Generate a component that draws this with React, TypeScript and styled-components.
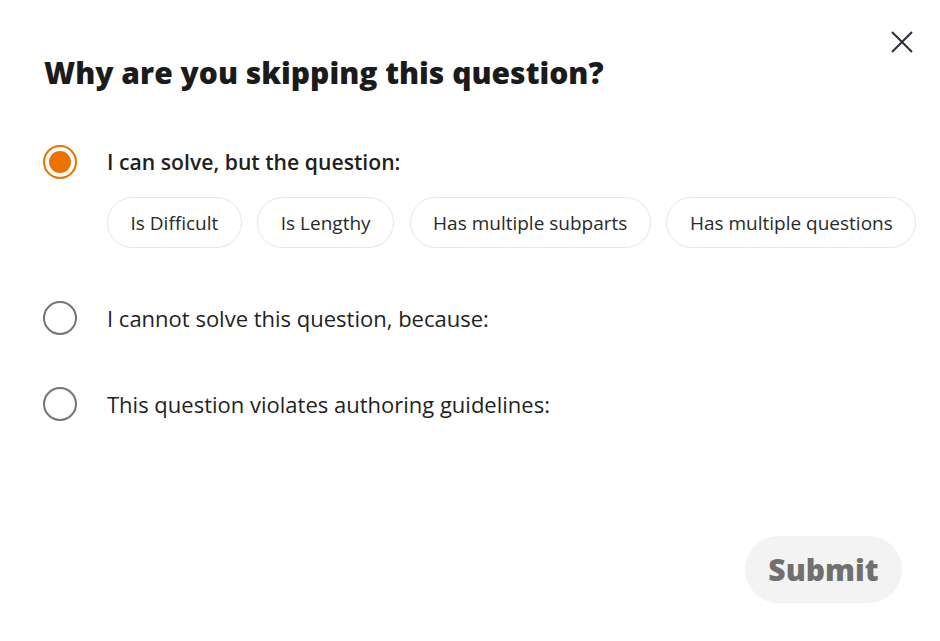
import React, { useState } from "react";
import styled, { createGlobalStyle } from "styled-components";

const GlobalStyle = createGlobalStyle`
  body {
    margin: 0;
    background: #ffffff;
    font-family: "Open Sans", "Lato", sans-serif;
    color: #1f1f1f;
  }
`;

const Dialog = styled.div`
  width: 940px;
  height: 641px;
  box-sizing: border-box;
  padding: 28px 24px 38px 43px;
  display: flex;
  flex-direction: column;
`;

const Header = styled.div`
  display: flex;
  justify-content: space-between;
  align-items: flex-start;
`;

const Title = styled.h1`
  margin: 24px 0 0 1px;
  font-size: 30px;
  line-height: 42px;
  font-weight: 800;
  color: #1b1b1b;
`;

const CloseButton = styled.button`
  width: 28px;
  height: 28px;
  padding: 0;
  border: none;
  background: none;
  cursor: pointer;
  display: flex;
  align-items: center;
  justify-content: center;
`;

const Options = styled.div`
  margin-top: 51px;
  display: flex;
  flex-direction: column;
`;

const Option = styled.div<{ $space: number }>`
  margin-bottom: ${(p) => p.$space}px;
`;

const OptionRow = styled.label`
  display: flex;
  align-items: center;
  gap: 30px;
  cursor: pointer;
`;

const Radio = styled.span<{ $checked: boolean }>`
  width: 34px;
  height: 34px;
  box-sizing: border-box;
  border-radius: 50%;
  border: 2.5px solid ${(p) => (p.$checked ? "#e87500" : "#747474")};
  display: flex;
  align-items: center;
  justify-content: center;
  flex-shrink: 0;

  &::after {
    content: "";
    width: 22px;
    height: 22px;
    border-radius: 50%;
    background: ${(p) => (p.$checked ? "#ec7200" : "transparent")};
  }
`;

const Label = styled.span<{ $bold: boolean }>`
  font-size: ${(p) => (p.$bold ? 21.2 : 22)}px;
  line-height: 30px;
  font-weight: ${(p) => (p.$bold ? 600 : 400)};
  color: #1f1f1f;
`;

const Chips = styled.div`
  display: flex;
  gap: 15.5px;
  margin: 18px -30px 0 64px;
`;

const Chip = styled.button<{ $active: boolean }>`
  flex-shrink: 0;
  white-space: nowrap;
  height: 51px;
  padding: 0 22.5px;
  border-radius: 26px;
  border: 1.5px solid ${(p) => (p.$active ? "#e87500" : "#e6e6e6")};
  background: #ffffff;
  font-family: "Open Sans", "Lato", sans-serif;
  font-size: 19px;
  color: #2a2a2a;
  cursor: pointer;
`;

const Footer = styled.div`
  margin-top: auto;
  display: flex;
  justify-content: flex-end;
  padding-right: 14px;
`;

const SubmitButton = styled.button`
  width: 157px;
  height: 67px;
  border: none;
  border-radius: 34px;
  background: #f3f3f3;
  color: #707070;
  font-family: "Open Sans", "Lato", sans-serif;
  font-size: 30px;
  font-weight: 800;
  cursor: not-allowed;
`;

const reasons = ["Is Difficult", "Is Lengthy", "Has multiple subparts", "Has multiple questions"];

const options = [
  { id: "can", text: "I can solve, but the question:", space: 53 },
  { id: "cannot", text: "I cannot solve this question, because:", space: 52 },
  { id: "violates", text: "This question violates authoring guidelines:", space: 0 },
];

export default function App() {
  const [selected, setSelected] = useState("can");
  const [reason, setReason] = useState<string | null>(null);

  return (
    <Dialog>
      <GlobalStyle />
      <Header>
        <Title>Why are you skipping this question?</Title>
        <CloseButton aria-label="Close">
          <svg width="22" height="22" viewBox="0 0 22 22">
            <path d="M1 1 L21 21 M21 1 L1 21" stroke="#2b2b3c" strokeWidth="2" fill="none" />
          </svg>
        </CloseButton>
      </Header>
      <Options>
        {options.map((o) => (
          <Option key={o.id} $space={o.space}>
            <OptionRow onClick={() => setSelected(o.id)}>
              <Radio $checked={selected === o.id} />
              <Label $bold={selected === o.id}>{o.text}</Label>
            </OptionRow>
            {o.id === "can" && selected === "can" && (
              <Chips>
                {reasons.map((r) => (
                  <Chip key={r} $active={reason === r} onClick={() => setReason(r)}>
                    {r}
                  </Chip>
                ))}
              </Chips>
            )}
          </Option>
        ))}
      </Options>
      <Footer>
        <SubmitButton disabled>Submit</SubmitButton>
      </Footer>
    </Dialog>
  );
}
